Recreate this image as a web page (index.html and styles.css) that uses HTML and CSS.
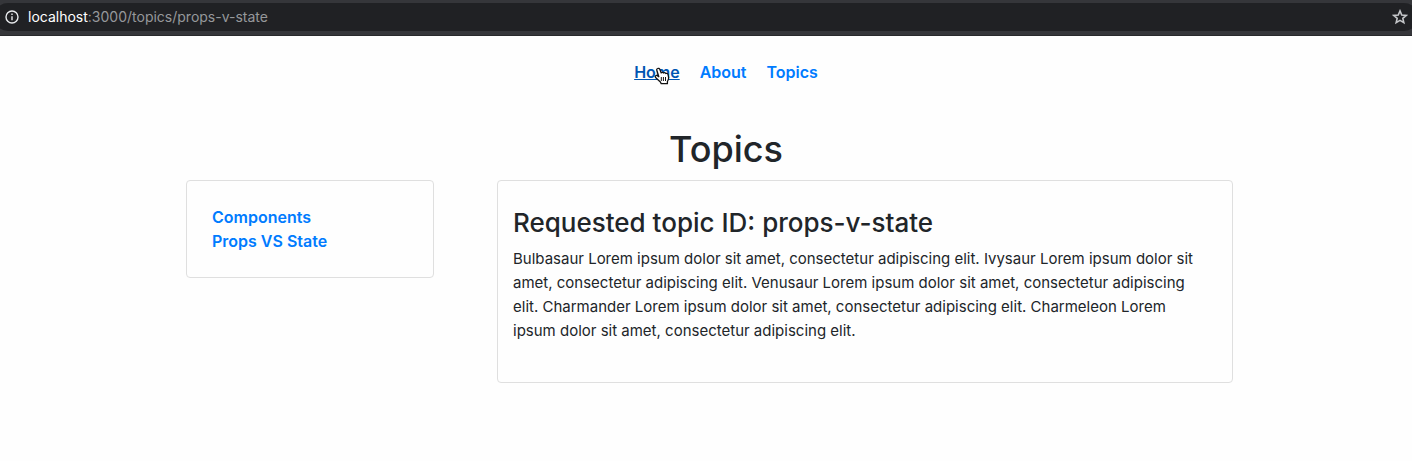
FILE: index.html
```html
<!DOCTYPE html>
<html lang="en">
<head>
<meta charset="utf-8">
<meta name="viewport" content="width=device-width, initial-scale=1">
<title>Topics</title>
<link rel="stylesheet" href="styles.css">
</head>
<body>
<header class="toolbar">
  <div class="address">
    <svg class="info-icon" viewBox="0 0 14 14" width="14" height="14" aria-hidden="true">
      <circle cx="7" cy="7" r="6" fill="none" stroke="#e8eaed" stroke-width="1.4"/>
      <path d="M7 6.2v4M7 3.6v1.4" stroke="#e8eaed" stroke-width="1.4"/>
    </svg>
    <div class="url"><span class="host">localhost</span>:3000/topics/props-v-state</div>
    <button class="star" type="button" aria-label="Bookmark this page">
      <svg viewBox="0 0 16 16" width="16" height="16" aria-hidden="true">
        <path d="M8 1.9l1.75 4.1 4.45.4-3.37 2.93 1 4.37L8 11.4l-3.83 2.3 1-4.37L1.8 6.4 6.25 6z" fill="none" stroke="#c4c6c9" stroke-width="1.6"/>
      </svg>
    </button>
  </div>
</header>
<div class="page">
  <nav aria-label="Main">
    <ul class="menu">
      <li class="hovered"><a class="link active" href="#home">Home</a>
        <svg class="pointer" viewBox="0 0 16 18" width="16" height="18" aria-hidden="true">
          <path d="M3.6 1.5c.9-.5 1.8-.1 2.2.8l1.4 3.6c.5-.7 1.7-.8 2.3.1.7-.6 1.8-.5 2.3.5 1-.5 2 .1 2.3 1.3l.5 2.6c.2 1.2-.2 2.2-.7 3.1l-.5 1v2.2H7.2l-.8-1.8-4.6-4.1c-.9-.8-.8-1.7-.2-2.1.7-.5 1.5-.2 2.3.4l.9.6L2.8 3.3c-.3-.8 0-1.5.8-1.8z" fill="#fff" stroke="#111" stroke-width="1.3" stroke-linejoin="round"/>
          <path d="M7.3 10v4M9.4 10v4M11.5 10v4" stroke="#111" stroke-width="1"/>
        </svg>
      </li>
      <li><a class="link" href="#about">About</a></li>
      <li><a class="link" href="#topics">Topics</a></li>
    </ul>
  </nav>
  <main class="container">
    <h1 class="title">Topics</h1>
    <div class="columns">
      <ul class="card topic-list">
        <li><a class="link" href="#components">Components</a></li>
        <li><a class="link" href="#props-v-state">Props VS State</a></li>
      </ul>
      <article class="card topic">
        <h2 class="topic-title">Requested topic ID: props-v-state</h2>
        <p class="topic-text">Bulbasaur Lorem ipsum dolor sit amet, consectetur adipiscing elit. Ivysaur Lorem ipsum dolor sit amet, consectetur adipiscing elit. Venusaur Lorem ipsum dolor sit amet, consectetur adipiscing elit. Charmander Lorem ipsum dolor sit amet, consectetur adipiscing elit. Charmeleon Lorem ipsum dolor sit amet, consectetur adipiscing elit.</p>
      </article>
    </div>
  </main>
</div>
</body>
</html>
```
FILE: styles.css
```css
* {
  box-sizing: border-box;
}

body {
  margin: 0;
  background: #fefefe;
  color: #212529;
  font-family: Inter, "Liberation Sans", sans-serif;
  font-size: 16px;
  line-height: 24px;
}

.toolbar {
  padding: 3px 0 4px;
  overflow: hidden;
  background: #35363a;
  border-bottom: 1px solid #28292c;
}

.address {
  display: flex;
  align-items: center;
  gap: 9px;
  height: 28px;
  margin: 0 -6px;
  padding: 0 10px 0 11px;
  border-radius: 14px;
  background: #202124;
}

.url {
  flex: 1;
  color: #96989b;
  font-size: 14px;
}

.host {
  color: #fff;
}

.star {
  display: flex;
  padding: 0;
  border: 0;
  background: none;
}

.page {
  padding: 24px 0 24px 40px;
}

.menu {
  display: flex;
  justify-content: center;
  gap: 20px;
  margin: 0;
  padding: 0;
  list-style: none;
}

.hovered {
  position: relative;
}

.pointer {
  position: absolute;
  left: 20px;
  top: 7px;
}

.link {
  color: #007bff;
  font-weight: 600;
  text-decoration: none;
}

.active {
  color: #0056b3;
  text-decoration: underline;
}

.container {
  max-width: 1140px;
  margin: 0 auto;
  padding-top: 41px;
}

.title {
  margin: 0 0 7px;
  font-size: 36px;
  font-weight: 500;
  line-height: 48px;
  text-align: center;
}

.columns {
  display: grid;
  grid-template-columns: 248fr 736fr;
  align-items: start;
  gap: 63px;
  padding: 0 63px 0 30px;
}

.card {
  margin: 0;
  border: 1px solid #dfdfdf;
  border-radius: 4px;
}

.topic-list {
  padding: 24px 25px;
  list-style: none;
}

.topic {
  padding: 25px 24px 39px 15px;
}

.topic-title {
  margin: 0 0 7px;
  font-size: 26px;
  font-weight: 500;
  line-height: 34px;
}

.topic-text {
  margin: 0;
  font-size: 15px;
}
```
